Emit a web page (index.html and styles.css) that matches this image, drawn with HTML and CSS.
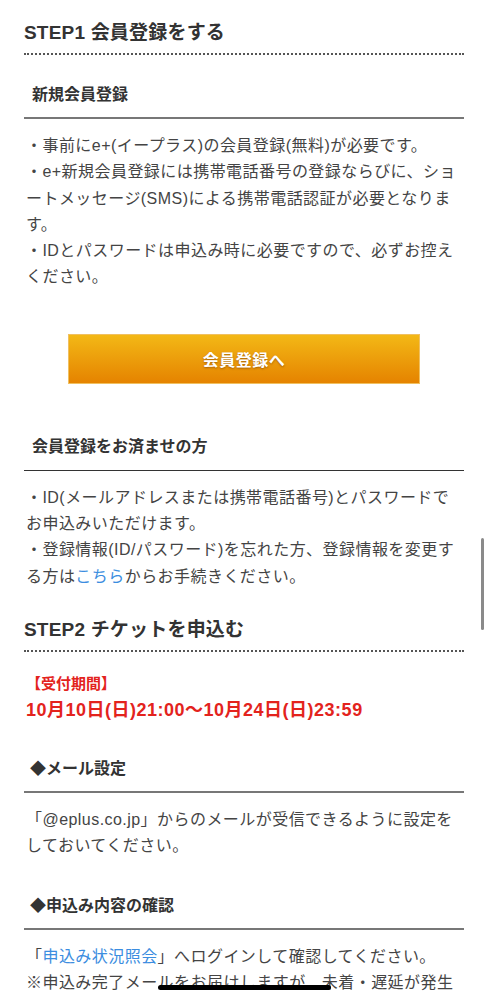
FILE: index.html
```html
<!DOCTYPE html>
<html lang="ja">
<head>
    <meta charset="UTF-8">
    <meta name="viewport" content="width=device-width, initial-scale=1.0">
    <title>申込み方法</title>
    <link rel="stylesheet" href="styles.css">
</head>
<body>
    <div class="container">
        <h2 class="step-title step1">STEP1 会員登録をする</h2>

        <h3 class="sub-title first">新規会員登録</h3>
        <div class="text-block">
            ・事前にe+(イープラス)の会員登録(無料)が必要です。<br>
            ・e+新規会員登録には携帯電話番号の登録ならびに、ショートメッセージ(SMS)による携帯電話認証が必要となります。<br>
            ・IDとパスワードは申込み時に必要ですので、必ずお控えください。
        </div>

        <div class="btn-area">
            <a class="btn-orange" href="#">会員登録へ</a>
        </div>

        <h3 class="sub-title dark">会員登録をお済ませの方</h3>
        <div class="text-block">
            ・ID(メールアドレスまたは携帯電話番号)とパスワードでお申込みいただけます。<br>
            ・登録情報(ID/パスワード)を忘れた方、登録情報を変更する方は<a href="#">こちら</a>からお手続きください。
        </div>

        <h2 class="step-title step2">STEP2 チケットを申込む</h2>

        <div class="period">
            <div class="period-label">【受付期間】</div>
            <div class="period-date">10月10日(日)21:00〜10月24日(日)23:59</div>
        </div>

        <h3 class="sub-title mail">◆メール設定</h3>
        <div class="text-block">
            「@eplus.co.jp」からのメールが受信できるように設定をしておいてください。
        </div>

        <h3 class="sub-title mail">◆申込み内容の確認</h3>
        <div class="text-block">
            「<a href="#">申込み状況照会</a>」へログインして確認してください。<br>
            ※申込み完了メールをお届けしますが、未着・遅延が発生する場合がございますので、必ず申込み状況照会にてご確認ください。
        </div>
    </div>

    <div class="scroll-thumb"></div>
    <div class="home-bar"></div>
</body>
</html>
```

FILE: styles.css
```css
body {
    margin: 0;
    background-color: #fff;
    color: #444;
    font-family: 'Liberation Sans', 'Noto Sans CJK JP', sans-serif;
}

.container {
    padding: 0 24px 60px;
}

a {
    color: #3b8de0;
    text-decoration: none;
}

.step-title {
    margin: 0;
    font-size: 19px;
    font-weight: bold;
    line-height: 26px;
    letter-spacing: 0.2px;
    color: #333;
    padding-bottom: 7px;
    border-bottom: 2px dotted #555;
}

.step1 {
    margin-top: 20px;
}

.step2 {
    margin-top: 27px;
}

.sub-title {
    margin: 0;
    padding: 0 0 10px 8px;
    font-size: 16px;
    font-weight: bold;
    line-height: 24px;
    color: #333;
    border-bottom: 2px solid #777;
}

.sub-title.first {
    margin-top: 28px;
}

.sub-title.dark {
    margin-top: 51px;
    padding-bottom: 11px;
    border-bottom: 1px solid #333;
}

.sub-title.mail {
    margin-top: 34px;
    padding-left: 6px;
}

.text-block {
    margin-top: 14px;
    font-size: 16px;
    line-height: 26.3px;
    letter-spacing: 0.45px;
    padding-left: 2px;
}

.btn-area {
    display: flex;
    justify-content: center;
    margin-top: 43px;
}

.btn-orange {
    display: flex;
    align-items: center;
    justify-content: center;
    width: 350px;
    height: 48px;
    border: 1px solid #f0c060;
    background: linear-gradient(to bottom, #f3b816, #e58300);
    color: #fff;
    font-size: 16px;
    font-weight: bold;
    letter-spacing: 0.5px;
    text-shadow: 0 1px 2px rgba(120, 60, 0, 0.6);
}

.period {
    margin-top: 19px;
    color: #e3231d;
    font-weight: bold;
    line-height: 26px;
    padding-left: 2px;
}

.period-label {
    font-size: 15px;
}

.period-date {
    font-size: 18px;
    letter-spacing: 0.5px;
}

.scroll-thumb {
    position: fixed;
    top: 538px;
    right: 4px;
    width: 3px;
    height: 92px;
    border-radius: 2px;
    background-color: #8a8a8a;
}

.home-bar {
    position: fixed;
    left: 158px;
    top: 985px;
    width: 173px;
    height: 5px;
    border-radius: 3px;
    background-color: #000;
}
```
